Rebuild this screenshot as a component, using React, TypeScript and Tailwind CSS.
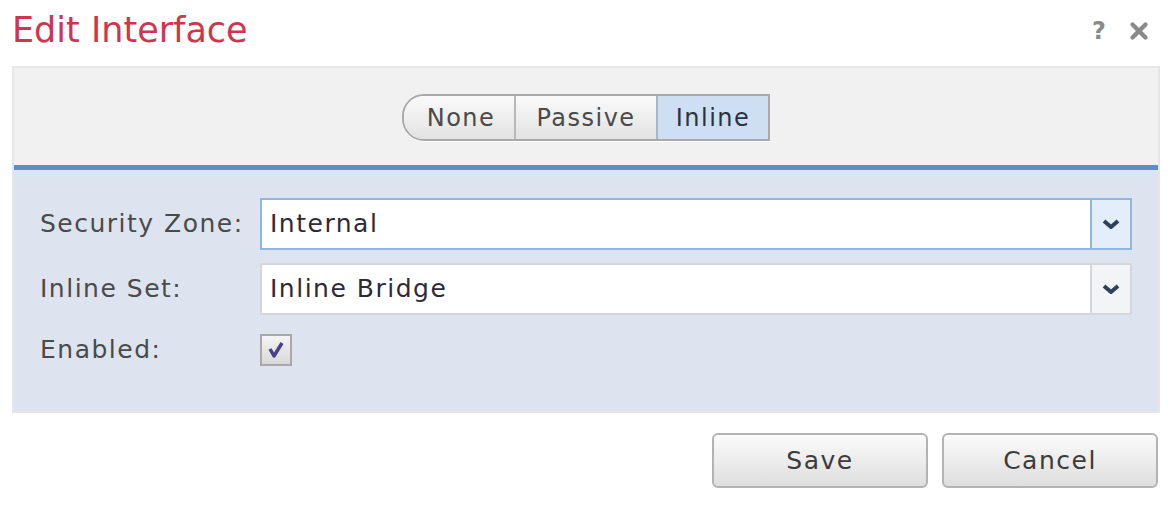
import { X } from 'lucide-react';

const font = { fontFamily: '"DejaVu Sans", Verdana, sans-serif' };

function Select({ value, focused }: { value: string; focused?: boolean }) {
  return (
    <div
      className={`flex h-[52px] flex-1 border-2 bg-white ${
        focused ? 'border-[#8fb6e0]' : 'border-[#d3d6dc]'
      }`}
    >
      <div className="flex flex-1 items-center pl-[8px] text-[25px] tracking-[1.5px] text-[#2e2a38]">{value}</div>
      <div
        className={`flex w-[40px] items-center justify-center border-l-2 ${
          focused ? 'border-[#8fb6e0] bg-[#e3eefa]' : 'border-[#d3d6dc] bg-[#f3f4f6]'
        }`}
      >
        <svg width="18" height="12" viewBox="0 0 18 12">
          <path d="M2 3 L9 9 L16 3" stroke="#2f3f5c" strokeWidth="4" fill="none" strokeLinejoin="round" />
        </svg>
      </div>
    </div>
  );
}

export default function App() {
  return (
    <div className="h-[513px] w-[1176px] bg-white" style={font}>
      <div className="flex h-[66px] items-start justify-between pl-[12px] pr-[24px] pt-[8px]">
        <h1 className="text-[35px] leading-[44px] text-[#d0354e]">Edit Interface</h1>
        <div className="flex items-center gap-[20px] pt-[10px] text-[#8a8a8a]">
          <span className="text-[24px] font-bold leading-none">?</span>
          <X className="h-[26px] w-[26px]" strokeWidth={4} />
        </div>
      </div>

      <div className="mx-[12px] w-[1148px] border-2 border-[#e6e6e6]">
        <div className="flex h-[97px] items-center justify-center bg-[#f1f1f1] pt-[2px]">
          <div className="flex h-[47px] overflow-hidden rounded-l-[22px] border-2 border-[#a9a9a9] text-[24px] tracking-[1.5px] text-[#4a4a4a] shadow-[0_1px_0_#ffffff]">
            <div className="flex w-[110px] items-center justify-center bg-gradient-to-b from-[#fafafa] to-[#e2e2e2] pl-[4px]">
              None
            </div>
            <div className="flex w-[142px] items-center justify-center border-l-2 border-[#b8b8b8] bg-gradient-to-b from-[#fafafa] to-[#e2e2e2]">
              Passive
            </div>
            <div className="flex w-[112px] items-center justify-center border-l-2 border-[#a9b4c4] bg-[#cfdff3] text-[#2e3140]">
              Inline
            </div>
          </div>
        </div>
        <div className="h-[5px] bg-[#5b8dd0]" />
        <div className="flex flex-col gap-[13px] bg-[#dde4f0] pb-[39px] pl-[26px] pr-[26px] pt-[28px] text-[25px] tracking-[1.5px] text-[#4a4a4a]">
          <div className="flex items-center">
            <div className="w-[220px]">Security Zone:</div>
            <Select value="Internal" focused />
          </div>
          <div className="flex items-center">
            <div className="w-[220px]">Inline Set:</div>
            <Select value="Inline Bridge" />
          </div>
          <div className="flex h-[44px] items-center">
            <div className="w-[220px]">Enabled:</div>
            <div className="flex h-[32px] w-[32px] items-center justify-center border-2 border-[#a8a8a8] bg-gradient-to-b from-[#f4f4f4] to-[#d9d9d9]">
              <svg width="20" height="20" viewBox="0 0 20 20">
                <path d="M4 9 L8 16 L16 3" stroke="#4b3f8f" strokeWidth="3.5" fill="none" strokeLinejoin="round" />
              </svg>
            </div>
          </div>
        </div>
      </div>

      <div className="flex justify-end gap-[14px] pr-[18px] pt-[20px]">
        <button className="h-[55px] w-[216px] rounded-[6px] border-2 border-[#b3b3b3] bg-gradient-to-b from-[#fbfbfb] to-[#dedede] text-[25px] tracking-[1.5px] text-[#3c3c3c]">
          Save
        </button>
        <button className="h-[55px] w-[216px] rounded-[6px] border-2 border-[#b3b3b3] bg-gradient-to-b from-[#fbfbfb] to-[#dedede] text-[25px] tracking-[1.5px] text-[#3c3c3c]">
          Cancel
        </button>
      </div>
    </div>
  );
}
